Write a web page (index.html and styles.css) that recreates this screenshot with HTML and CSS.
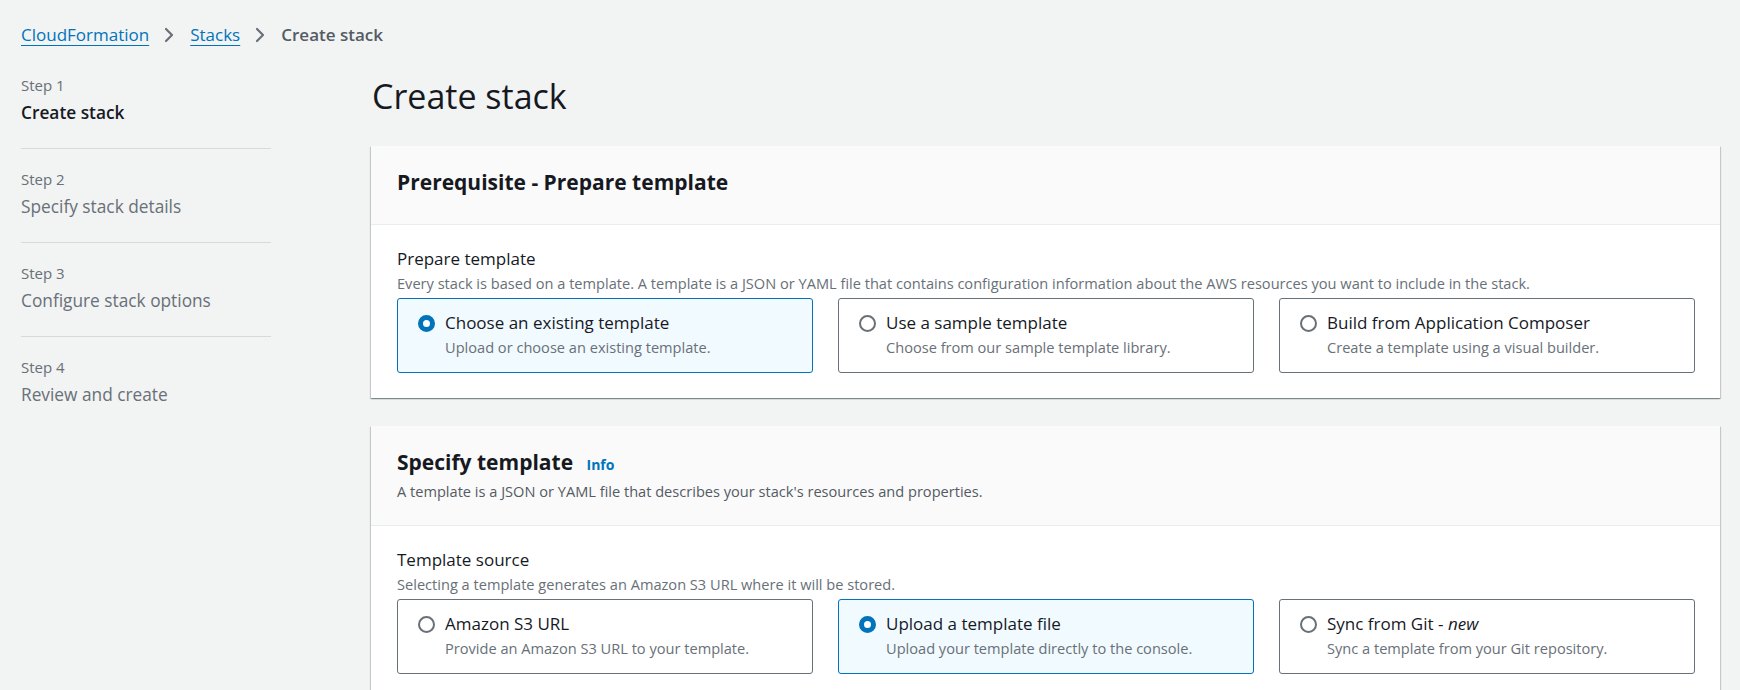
FILE: index.html
```html
<!DOCTYPE html>
<html lang="en">
<head>
<meta charset="utf-8">
<title>Create stack</title>
<link rel="stylesheet" href="styles.css">
</head>
<body>
<nav class="breadcrumbs">
  <a class="crumb-link" href="#">CloudFormation</a>
  <svg class="chev" viewBox="0 0 10 16" width="10" height="16"><path d="M2 2 L8 8 L2 14" fill="none" stroke="#687078" stroke-width="2.2" stroke-linecap="round" stroke-linejoin="round"/></svg>
  <a class="crumb-link" href="#">Stacks</a>
  <svg class="chev" viewBox="0 0 10 16" width="10" height="16"><path d="M2 2 L8 8 L2 14" fill="none" stroke="#687078" stroke-width="2.2" stroke-linecap="round" stroke-linejoin="round"/></svg>
  <span class="crumb-current">Create stack</span>
</nav>
<div class="layout">
  <aside class="steps">
    <div class="step">
      <div class="step-num">Step 1</div>
      <div class="step-name active">Create stack</div>
    </div>
    <div class="step">
      <div class="step-num">Step 2</div>
      <div class="step-name">Specify stack details</div>
    </div>
    <div class="step">
      <div class="step-num">Step 3</div>
      <div class="step-name">Configure stack options</div>
    </div>
    <div class="step last">
      <div class="step-num">Step 4</div>
      <div class="step-name">Review and create</div>
    </div>
  </aside>
  <main class="main">
    <h1 class="page-title">Create stack</h1>
    <section class="container">
      <div class="container-header">
        <h2 class="container-title">Prerequisite - Prepare template</h2>
      </div>
      <div class="container-body">
        <div class="field-label">Prepare template</div>
        <div class="field-desc">Every stack is based on a template. A template is a JSON or YAML file that contains configuration information about the AWS resources you want to include in the stack.</div>
        <div class="tiles">
          <div class="tile selected">
            <span class="radio checked"></span>
            <div class="tile-text">
              <div class="tile-label">Choose an existing template</div>
              <div class="tile-desc">Upload or choose an existing template.</div>
            </div>
          </div>
          <div class="tile">
            <span class="radio"></span>
            <div class="tile-text">
              <div class="tile-label">Use a sample template</div>
              <div class="tile-desc">Choose from our sample template library.</div>
            </div>
          </div>
          <div class="tile">
            <span class="radio"></span>
            <div class="tile-text">
              <div class="tile-label">Build from Application Composer</div>
              <div class="tile-desc">Create a template using a visual builder.</div>
            </div>
          </div>
        </div>
      </div>
    </section>
    <section class="container">
      <div class="container-header tall">
        <h2 class="container-title">Specify template <a class="info" href="#">Info</a></h2>
        <div class="header-desc">A template is a JSON or YAML file that describes your stack's resources and properties.</div>
      </div>
      <div class="container-body">
        <div class="field-label">Template source</div>
        <div class="field-desc">Selecting a template generates an Amazon S3 URL where it will be stored.</div>
        <div class="tiles">
          <div class="tile">
            <span class="radio"></span>
            <div class="tile-text">
              <div class="tile-label">Amazon S3 URL</div>
              <div class="tile-desc">Provide an Amazon S3 URL to your template.</div>
            </div>
          </div>
          <div class="tile selected">
            <span class="radio checked"></span>
            <div class="tile-text">
              <div class="tile-label">Upload a template file</div>
              <div class="tile-desc">Upload your template directly to the console.</div>
            </div>
          </div>
          <div class="tile">
            <span class="radio"></span>
            <div class="tile-text">
              <div class="tile-label">Sync from Git - <em>new</em></div>
              <div class="tile-desc">Sync a template from your Git repository.</div>
            </div>
          </div>
        </div>
      </div>
    </section>
  </main>
</div>
</body>
</html>
```

FILE: styles.css
```css
* { box-sizing: border-box; }
html, body { margin: 0; padding: 0; }
body {
  background: #f2f3f3;
  font-family: "Open Sans", "Noto Sans", "Liberation Sans", sans-serif;
  color: #16191f;
  height: 690px;
  overflow: hidden;
}
a { color: #0073bb; }

.breadcrumbs {
  display: flex;
  align-items: center;
  padding: 24px 0 0 21px;
  height: 46px;
  font-size: 17px;
  line-height: 22px;
}
.crumb-link { color: #0073bb; text-decoration: underline; text-underline-offset: 4px; }
.chev { margin: 0 16px 0 15px; }
.crumb-current { color: #545b64; font-weight: 600; }

.layout {
  display: flex;
  margin-top: 29px;
}
.steps {
  width: 250px;
  margin-left: 21px;
  flex: none;
}
.step {
  padding: 20px 0 23px;
  border-bottom: 1px solid #d5dbdb;
}
.step:first-child { padding-top: 0; }
.step.last { border-bottom: none; }
.step-num {
  font-size: 15px;
  line-height: 20px;
  color: #687078;
}
.step-name {
  margin-top: 6px;
  font-size: 17.3px;
  line-height: 24px;
  color: #687078;
}
.step-name.active { color: #16191f; font-weight: 600; }

.main {
  flex: 1;
  margin-left: 100px;
  margin-right: 20px;
  min-width: 0;
}
.page-title {
  margin: 1px 0 30px 1px;
  font-size: 34px;
  line-height: 40px;
  font-weight: 400;
  color: #16191f;
}
.container {
  background: #fff;
  box-shadow: 0 1px 1px 0 rgba(0,28,36,.3), 1px 1px 1px 0 rgba(0,28,36,.15), -1px 1px 1px 0 rgba(0,28,36,.15);
  margin-bottom: 28px;
}
.container-header {
  background: #fafafa;
  border-bottom: 1px solid #eaeded;
  padding: 22px 25px 28px 26px;
}
.container-header.tall { padding: 22px 25px 24px 26px; }
.container-title {
  margin: 0;
  font-size: 21px;
  line-height: 28px;
  font-weight: 700;
  color: #16191f;
}
.info {
  font-size: 14px;
  font-weight: 700;
  text-decoration: none;
  margin-left: 8px;
  color: #0073bb;
}
.header-desc {
  margin-top: 2px;
  font-size: 14.6px;
  line-height: 20px;
  color: #545b64;
}
.container-body {
  padding: 23px 25px 25px 26px;
}
.field-label {
  font-size: 17px;
  line-height: 22px;
  color: #16191f;
}
.field-desc {
  margin-top: 3px;
  font-size: 14.6px;
  line-height: 20px;
  color: #687078;
}
.tiles {
  margin-top: 5px;
  display: grid;
  grid-template-columns: repeat(3, 1fr);
  gap: 25px;
}
.tile {
  display: flex;
  align-items: flex-start;
  border: 1px solid #687078;
  border-radius: 3px;
  height: 75px;
  padding: 13px 16px 0 20px;
  background: #fff;
}
.tile.selected {
  background: #f1faff;
  border-color: #0073bb;
}
.radio {
  flex: none;
  width: 17px;
  height: 17px;
  margin-top: 3px;
  border-radius: 50%;
  border: 2px solid #687078;
  background: #fff;
}
.radio.checked {
  border: 5px solid #0073bb;
  background: #fff;
}
.tile-text { margin-left: 10px; }
.tile-label {
  font-size: 17px;
  line-height: 22px;
  color: #16191f;
}
.tile-desc {
  margin-top: 3px;
  font-size: 14.6px;
  line-height: 20px;
  color: #687078;
}
```
